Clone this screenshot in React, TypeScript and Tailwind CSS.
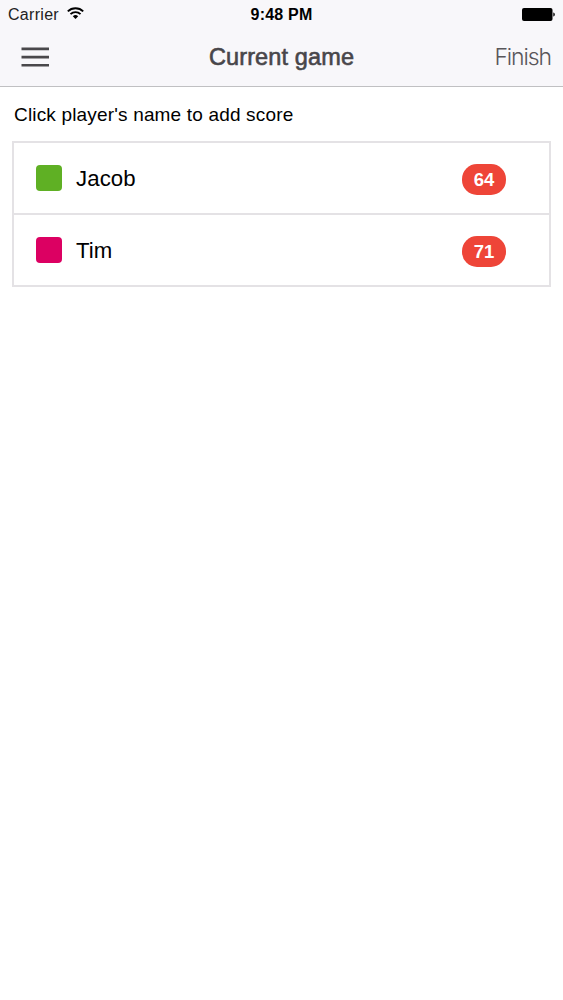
import React from "react";

const players = [
  { name: "Jacob", score: 64, swatch: "bg-[#5fb024]" },
  { name: "Tim", score: 71, swatch: "bg-[#dc0062]" },
];

export default function App() {
  return (
    <div className="h-[1000px] w-[563px] overflow-hidden bg-white font-['Liberation_Sans',Arial,sans-serif] text-black">
      <header className="h-[87px] border-b border-[#c0c0c2] bg-[#f8f7fa]">
        <div className="grid h-[28px] grid-cols-3 items-center pr-2 pl-2 text-[16px] leading-[28px]">
          <div className="flex items-center gap-[7.500px]">
            <span className="pt-px tracking-[0.3px] text-[#222]">Carrier</span>
            <svg className="-mt-[3px]" width="17" height="12" viewBox="0 0 17 12" fill="none" stroke="#000" strokeWidth="1.9">
              <path d="M.8 4.400a11 11 0 0 1 15.400 0M3.500 7.200a7.100 7.100 0 0 1 10 0" />
              <path d="M8.500 12 5.800 9.200a3.900 3.900 0 0 1 5.400 0Z" fill="#000" stroke="none" />
            </svg>
          </div>
          <span className="pt-px text-center font-bold tracking-[0.2px]">9:48 PM</span>
          <svg className="justify-self-end" width="33" height="13" viewBox="0 0 33 13">
            <rect x="0" y="0" width="30.500" height="13" rx="2" />
            <path d="M31.300 4.500c2 .5 2 3.500 0 4Z" />
          </svg>
        </div>
        <div className="grid h-[58px] grid-cols-[1fr_auto_1fr] items-center pr-[12px] pl-[21px]">
          <svg width="28" height="20" viewBox="0 0 28 20" fill="#4a484b">
            <path d="M.5 .5h27.500v2.700H.5zM.5 8.700h27.500v2.700H.5zM.5 16.900h27.500v2.700H.5z" />
          </svg>
          <h1 className="-ml-[9px] text-center text-[23.500px] leading-[28px] tracking-[0.13px] text-[#48464a] [-webkit-text-stroke:0.6px_#48464a]">Current game</h1>
          <button className="justify-self-end pt-px font-['Inter','Liberation_Sans',sans-serif] text-[23px] font-light tracking-[-1.1px] text-[#58565a]">Finish</button>
        </div>
      </header>
      <main className="px-3">
        <p className="h-[54px] pl-[2px] text-[19px] leading-[56px] tracking-[0.17px]">Click player's name to add score</p>
        <ul className="border-2 border-[#e4e2e5]">
          {players.map((p) => (
            <li key={p.name} className="flex h-[72px] items-center border-b-2 border-[#e4e2e5] pr-[43px] pl-[22px] last:h-[70px] last:border-b-0">
              <span className={`size-[26px] rounded-[4px] ${p.swatch}`} />
              <span className="ml-[14px] flex-1 pt-px text-[22.200px] tracking-[0.1px]">{p.name}</span>
              <span className="mt-[2px] flex h-[31px] w-[44px] items-center justify-center rounded-[15px] bg-[#ee4538] pt-px text-[18.500px] font-bold text-white">{p.score}</span>
            </li>
          ))}
        </ul>
      </main>
    </div>
  );
}
